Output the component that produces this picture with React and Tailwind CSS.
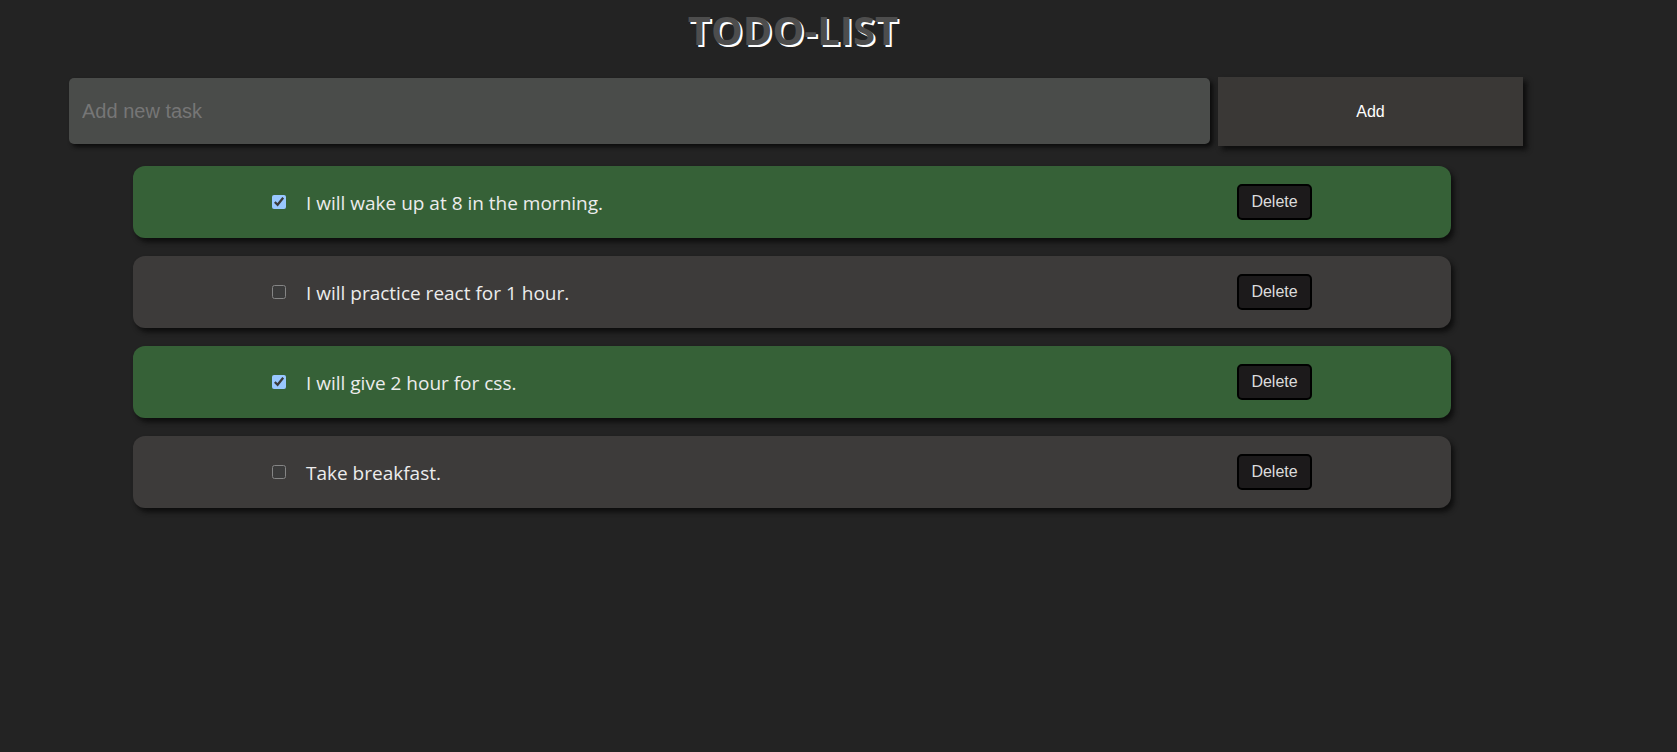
import React, { useState } from "react";

const initialTodos = [
  { id: 1, text: "I will wake up at 8 in the morning.", done: true },
  { id: 2, text: "I will practice react for 1 hour.", done: false },
  { id: 3, text: "I will give 2 hour for css.", done: true },
  { id: 4, text: "Take breakfast.", done: false },
];

const App = () => {
  const [todos, setTodos] = useState(initialTodos);
  const [task, setTask] = useState("");

  const addTodo = () => {
    if (!task.trim()) return;
    setTodos([...todos, { id: Date.now(), text: task.trim(), done: false }]);
    setTask("");
  };

  const toggle = (id) =>
    setTodos(todos.map((t) => (t.id === id ? { ...t, done: !t.done } : t)));

  const remove = (id) => setTodos(todos.filter((t) => t.id !== id));

  return (
    <div className="min-h-[752px] w-full bg-[#232323] [color-scheme:dark] font-['Open_Sans',sans-serif]">
      {/* TITLE */}
      <h1 className="w-[1586px] pt-[5px] text-center text-[40px] leading-[50px] font-bold text-[#4d4d4d] [text-shadow:2px_2px_0_#ffffff]">
        TODO-LIST
      </h1>

      {/* FORM */}
      <div className="mt-[23px] flex items-start pl-[69px]">
        <input
          value={task}
          onChange={(e) => setTask(e.target.value)}
          placeholder="Add new task"
          className="h-[66px] w-[1141px] rounded-[5px] bg-[#4a4c4a] px-[13px] font-['Liberation_Sans',Arial,sans-serif] text-[20px] text-white placeholder:text-[#767676] shadow-[3px_3px_4px_#0c0c0c] outline-none"
        />
        <button
          onClick={addTodo}
          className="ml-[8px] -mt-[1px] h-[69px] w-[305px] bg-[#3a3836] font-['Liberation_Sans',Arial,sans-serif] text-[16px] text-white shadow-[4px_4px_5px_#0e0e0e]"
        >
          Add
        </button>
      </div>

      {/* LIST */}
      <ul className="mt-[20px] ml-[133px] flex w-[1318px] flex-col gap-[18px]">
        {todos.map((todo) => (
          <li
            key={todo.id}
            className={`flex h-[72px] items-center justify-between rounded-[12px] px-[139px] shadow-[3px_4px_5px_#0e0e0e] ${
              todo.done ? "bg-[#366137]" : "bg-[#3d3b3a]"
            }`}
          >
            <div className="flex items-center">
              <input
                type="checkbox"
                checked={todo.done}
                onChange={() => toggle(todo.id)}
                className="h-[14px] w-[14px]"
              />
              <span className="ml-[20px] pt-[2px] text-[19px] text-[#ececec]">{todo.text}</span>
            </div>
            <button
              onClick={() => remove(todo.id)}
              className="h-[36px] w-[75px] rounded-[5px] border-2 border-black bg-[#1c1a1b] font-['Liberation_Sans',Arial,sans-serif] text-[16px] text-[#dcdcdc]"
            >
              Delete
            </button>
          </li>
        ))}
      </ul>
    </div>
  );
};

export default App;
